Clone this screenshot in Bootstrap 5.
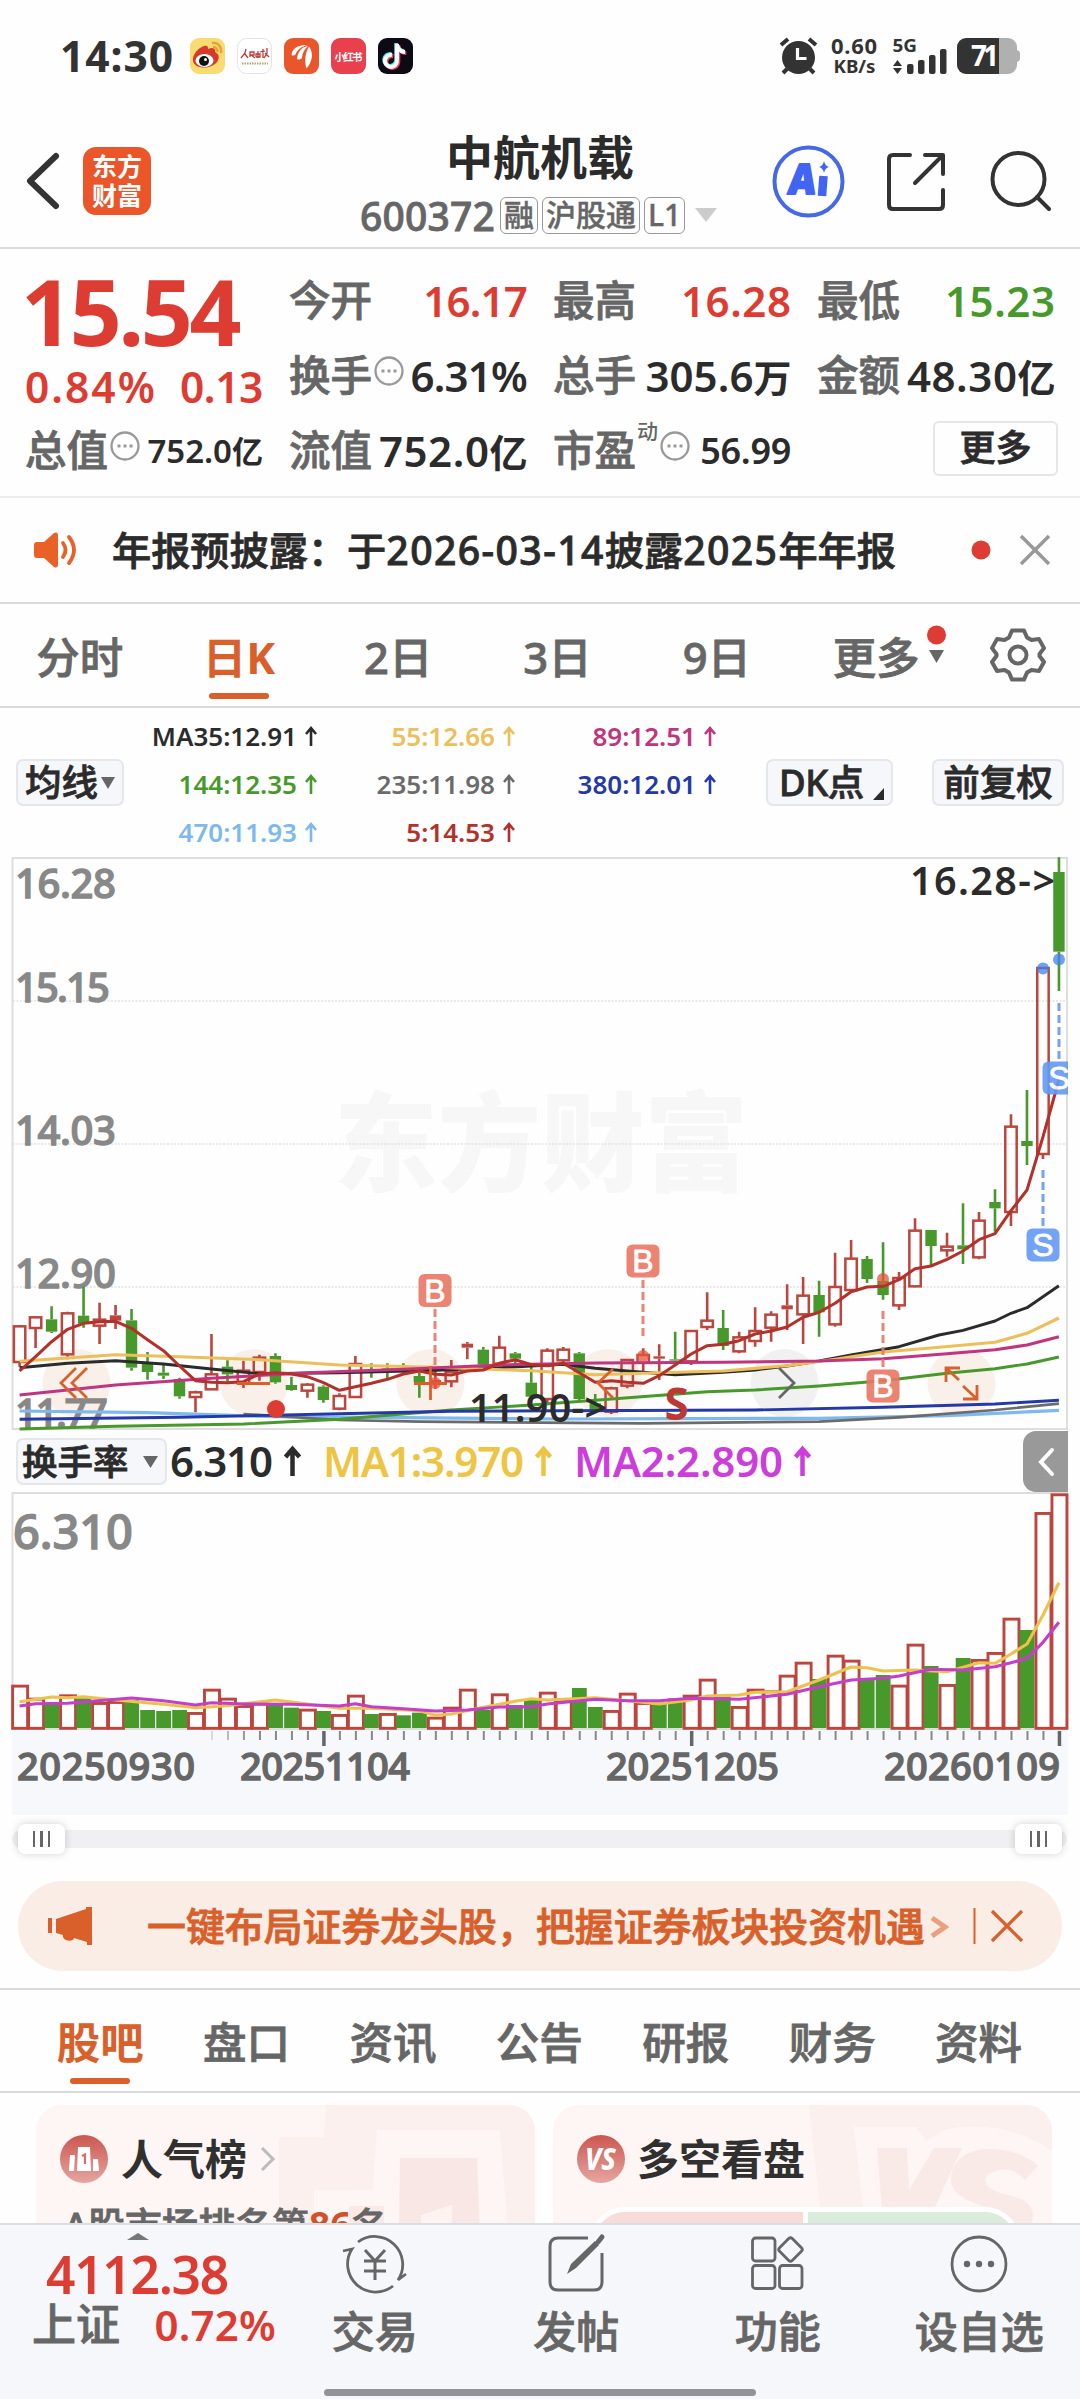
<!DOCTYPE html>
<html lang="zh-CN">
<head>
<meta charset="utf-8">
<meta name="viewport" content="width=device-width, initial-scale=1">
<title>中航机载 600372</title>
<link href="https://cdn.jsdelivr.net/npm/bootstrap@5.3.0/dist/css/bootstrap.min.css" rel="stylesheet">
<style>
:root{--up:#dd3c32;--down:#47992c;--ink:#2b2b2b;--sub:#666;--brand:#d9602a;--rule:#dadada}
body{width:1080px;height:2400px;overflow:hidden;background:#fefefe;color:var(--ink);font-family:"Noto Sans","Noto Sans CJK SC",sans-serif;font-weight:500;line-height:1}
svg{display:block;flex:none;overflow:visible}
.nw,.nw *{white-space:nowrap}
/* thickens the regular face to a medium weight */
.med{-webkit-text-stroke:.8px currentColor}
text.axisnum{fill:#888;stroke:#888;stroke-width:1.3px}
text.axisdate{fill:#666;stroke:#666;stroke-width:1.3px}
.nomed{-webkit-text-stroke:0}
.statusbar{height:110px;padding:2px 60px 0 60px}
.clock{font-size:42.5px;font-weight:700;letter-spacing:1px;width:130px;color:#333}
.topbar{height:139px;border-bottom:2px solid var(--rule)}
.brandlogo{width:68px;height:68px;border-radius:13px;background:#ea5529;color:#fff;font-size:25px;font-weight:700;line-height:29px}
.stockname{font-size:47px;font-weight:700;line-height:50px}
.codeline{font-size:39px;color:var(--sub)}
.tagbox{border:1.5px solid #999;border-radius:6px;height:37px;font-size:30px;line-height:33px;text-align:center;-webkit-text-stroke:.4px currentColor}
.quotes{display:grid;grid-template-columns:repeat(4,238px);column-gap:26px;grid-template-rows:75px 75px 75px;padding:14px 0 0 25px;height:249px;border-bottom:2px solid #eee}
.bigprice{font-size:91px;font-weight:700;letter-spacing:-3.3px;color:var(--up);height:94px;line-height:97px;margin-left:-4px}
.qlabel{font-size:41.5px;color:var(--sub)}
.qval{font-size:42px;letter-spacing:.6px;margin-right:-.6px}
.tightnum{letter-spacing:-.8px;margin-right:0}
.unit{font-size:38px;letter-spacing:0}
.red{color:var(--up)}.grn{color:var(--down)}
.morebtn{width:125px;height:55px;border:2px solid #e6e6e6;border-radius:6px;font-size:36px}
.notice{height:106px;border-bottom:2px solid var(--rule);font-size:39.2px}
.ktabs{height:104px;border-bottom:2px solid var(--rule);color:var(--sub);font-size:43.5px}
.ktabs>div{width:159.3px;height:102px;padding-top:5px}
.on{color:var(--brand);position:relative;font-weight:700;-webkit-text-stroke:0}
.on::after{content:"";position:absolute;left:50%;bottom:7px;width:60px;height:6px;margin-left:-30px;border-radius:3px;background:var(--brand)}
.mablock{height:149px}
.chip{background:#f6f7fa;border:2px solid #e5e7eb;border-radius:7px;height:47px;font-size:36.5px}
.malist{display:grid;grid-template-columns:200px 198px 201px;grid-template-rows:48px 48px 48px;font-size:26px;font-weight:600;width:599px;padding-top:2px}
.malist>div{display:flex;justify-content:flex-end;align-items:center;gap:8px}
.turnover{height:63px;font-size:42px;font-weight:600}
.drawer{width:45px;height:61px;background:#999;border-radius:13px 0 0 13px}
.track{margin:15px 13px 0 12px;height:18px;border-radius:9px;background:#f0f0f3}
.thumb{width:47px;height:30px;border-radius:7px;background:#fff;box-shadow:0 0 8px rgba(0,0,0,.18);gap:5px}
.thumb i{width:2.5px;height:16px;background:#666}
.promo{margin:33px 18px 17px;height:90px;border-radius:45px;background:#faede5;color:var(--brand);font-size:38.9px}
.ntabs{height:105px;border-top:2px solid var(--rule);border-bottom:2px solid var(--rule);font-size:43.5px;color:var(--sub);padding:0 28px 0 27px}
.ntabs>div{height:101px;width:146.4px;padding-top:5px}
.feed{height:130px;overflow:hidden;padding:12px 28px 0 36px;gap:18px}
.fcard{width:499px;height:240px;border-radius:26px;background:#fdf6f4;overflow:hidden;position:relative}
.fcard>.backdrop{position:absolute;left:0;top:0}
.fcard>.inner{position:relative}
.fhead{font-size:42px;font-weight:700;height:108px;padding-left:24px;color:#303030}
.frank{font-size:36.8px;color:var(--sub);padding-left:28px;margin-top:-7px;line-height:38px}
.pill2{width:430px;height:70px;margin:-6px 0 0 37px;border:5px solid #fff;border-radius:38px;overflow:hidden;font-size:32px;font-weight:700}
.pill2>div{padding-top:12px}
.bottombar{height:176px;background:#f6f7fa;border-top:2px solid #dcdde0;color:var(--sub);position:relative}
.homebar{position:absolute;left:324px;bottom:3px;width:432px;height:7px;border-radius:4px;background:#929395}
.navcell{width:201.5px;font-size:43px}
</style>
<script src="https://cdn.jsdelivr.net/npm/bootstrap@5.3.0/dist/js/bootstrap.bundle.min.js"></script>
</head>
<body class="nw">

<div class="statusbar d-flex align-items-center">
  <div class="clock">14:30</div>
  <div class="d-flex" style="gap:12px">
    <svg width="35" height="36" viewBox="0 0 35 36"><rect width="35" height="36" rx="9" fill="#f8dc72"/><path d="M3 23C2 17 8 10 14 8c4-1 4 1 4 3 4-2 8-1 7 3 4 2 5 6 2 10-5 7-22 8-24-1z" fill="#d83a2a"/><ellipse cx="14.500" cy="22.500" rx="9" ry="6.500" fill="#fff"/><circle cx="14" cy="23" r="5" fill="#111"/><circle cx="15.500" cy="21.500" r="1.500" fill="#fff"/><path d="M22 5c6-1 10 4 9 10M23 9c3 0 5 2 4 5" stroke="#eaa13a" stroke-width="2.500" fill="none"/></svg>
    <svg width="35" height="36" viewBox="0 0 35 36"><rect x=".5" y=".5" width="34" height="35" rx="9" fill="#fff" stroke="#e4e4e4"/><path d="M4 20l4-5 1-4M8 16l3 4M13 19v-5h4v3h-3l4 3M19 19v-3h4v3h-4M21 13v7M26 11v9M25 14l3-1M30 10v5l-3 5M28 15l4 4M23 14l3-1" stroke="#bd3b3b" stroke-width="1.300" fill="none"/><path d="M5 25.500h26" stroke="#b9a66a" stroke-width="2" stroke-dasharray="1.500 1"/></svg>
    <svg width="35" height="36" viewBox="0 0 35 36"><rect width="35" height="36" rx="9" fill="#ea5529"/><path d="M7.500 17C8 10 15 6.500 23 7c-6 2-10 5-11.500 9.500-1 1-2.500 1.500-4 .5zM13 21c.5-7 5-12.500 11-13-4 4-5.500 7-6 12-1.500 1.500-3.500 2-5 1zM22.500 30.500c-2.500-8-1-16 2.500-22 4.500 6 4 14.500-2.500 22z" fill="#fff"/></svg>
    <svg width="35" height="36" viewBox="0 0 35 36"><rect width="35" height="36" rx="9" fill="#e9404d"/><text x="17.500" y="22.500" font-size="10.500" font-weight="700" fill="#fff" text-anchor="middle" textLength="28">小红书</text></svg>
    <svg width="35" height="36" viewBox="0 0 35 36"><rect width="35" height="36" rx="9" fill="#0c0b14"/><g fill="none" stroke-width="4"><path d="M19 6v17a6 6 0 1 1-5-6M19 7c1 4 4 7 8 7" stroke="#f0405b" transform="translate(1.300 1)"/><path d="M19 5v17a6 6 0 1 1-5-6M19 6c1 4 4 7 8 7" stroke="#4ee0de" transform="translate(-.8 0)"/><path d="M19 6v17a6 6 0 1 1-5-6M19 7c1 4 4 7 8 7" stroke="#fff"/></g></svg>
  </div>
  <svg width="240" height="38" viewBox="780 38 240 38" class="ms-auto" fill="#333">
    <circle cx="798.500" cy="58.500" r="16.500"/><path d="M797.500 49v10.500h9" stroke="#fff" stroke-width="3.200" fill="none"/><path d="M781 46l7-6M816 46l-7-6M787 70l-4 4M810 70l4 4" stroke="#333" stroke-width="4"/>
    <text x="831" y="55" font-size="22" font-weight="700" textLength="46">0.60</text><text x="833.500" y="74" font-size="18.500" font-weight="700" textLength="42" lengthAdjust="spacingAndGlyphs">KB/s</text>
    <text x="892.500" y="53" font-size="18.500" font-weight="700" textLength="24.500" lengthAdjust="spacingAndGlyphs">5G</text>
    <path d="M893 67l4.500-6 4.500 6zM893 69l4.500 6 4.500-6z"/><rect x="907" y="65" width="6.500" height="10" rx="2"/><rect x="918" y="61" width="6.500" height="14" rx="2"/><rect x="929" y="56" width="6.500" height="19" rx="2"/><rect x="940" y="50" width="6.500" height="25" rx="2"/>
    <path d="M967 39h41a9 9 0 0 1 9 9v3q3 1 3 3v6q0 2-3 3v3a9 9 0 0 1-9 9h-41z" fill="#b0b0b0"/><path d="M999 39h-33a9 9 0 0 0-9 9v18a9 9 0 0 0 9 9h33z"/>
    <text x="971" y="67" font-size="28" font-weight="700" fill="#fff" textLength="28">71</text>
  </svg>
</div>

<div class="topbar d-flex">
  <svg width="32" height="56" viewBox="0 0 32 56" style="margin:43px 0 0 27px"><path d="M29 3L3 28l26 25" stroke="#333" stroke-width="6" fill="none" stroke-linecap="round" stroke-linejoin="round"/></svg>
  <div class="brandlogo text-center" style="margin:37px 0 0 24px;padding-top:5px">东方<br>财富</div>
  <div class="d-flex flex-column" style="margin-left:209px;width:371px">
    <div class="stockname" style="margin:22px 0 0 86px">中航机载</div>
    <div class="codeline med d-flex align-items-center" style="height:38px;margin-top:14px">
      <span style="width:140px;letter-spacing:.2px">600372</span>
      <span class="tagbox" style="width:38px">融</span><span class="tagbox" style="width:98px;margin-left:4px">沪股通</span><span class="tagbox" style="width:41px;margin-left:4px">L1</span>
      <svg width="22" height="14" style="margin-left:10px"><path d="M0 0h22L11 14z" fill="#ccc"/></svg>
    </div>
  </div>
  <svg width="280" height="74" viewBox="772 145 280 74" fill="none" stroke="#333" stroke-width="4" stroke-linecap="round" stroke-linejoin="round" style="margin:35px 0 0 41px">
    <circle cx="808.500" cy="181.500" r="34" stroke="#4568e8"/>
    <text x="786" y="194" font-size="42" font-weight="900" fill="#4164f5" stroke="#4164f5" stroke-width="2" textLength="27" lengthAdjust="spacingAndGlyphs" transform="translate(25 0) skewX(-7)">A</text><path d="M823.500 176l-1.500 20" stroke="#4164f5" stroke-width="8.500" stroke-linecap="butt"/><path d="M824 161q1 5 5 6-4 1-5 6-1-5-5-6 4-1 5-6z" fill="#4164f5" stroke="none"/>
    <path d="M910 155h-17q-4 0-4 4v46q0 4 4 4h46q4 0 4-4v-15M925 155h18v19M943 155l-28 28"/>
    <circle cx="1018.500" cy="179" r="26"/><path d="M1037 197l12 12"/>
  </svg>
</div>

<div class="quotes">
  <div style="grid-row:span 2">
    <div class="bigprice">15.54</div>
    <div class="red d-flex justify-content-between" style="font-size:42.500px;margin-top:9px;font-weight:600"><span style="letter-spacing:2px">0.84%</span><span style="letter-spacing:-.4px">0.13</span></div>
  </div>
  <div class="d-flex align-items-center justify-content-between"><span class="qlabel med">今开</span><span class="qval tightnum red fw-semibold">16.17</span></div>
  <div class="d-flex align-items-center justify-content-between"><span class="qlabel med">最高</span><span class="qval red fw-semibold">16.28</span></div>
  <div class="d-flex align-items-center justify-content-between"><span class="qlabel med">最低</span><span class="qval grn fw-semibold">15.23</span></div>
  <div class="d-flex align-items-center"><span class="qlabel med">换手</span><svg width="30" height="30" viewBox="0 0 30 30" style="margin:-10px 0 0 2px"><circle cx="15" cy="15" r="13.500" fill="none" stroke="#999" stroke-width="2.300"/><path d="M7.500 15h3M13.500 15h3M19.500 15h3" stroke="#999" stroke-width="3"/></svg><span class="qval tightnum ms-auto fw-semibold">6.31%</span></div>
  <div class="d-flex align-items-center justify-content-between"><span class="qlabel med">总手</span><span class="qval fw-semibold" style="letter-spacing:.1px">305.6<span class="unit">万</span></span></div>
  <div class="d-flex align-items-center justify-content-between"><span class="qlabel med">金额</span><span class="qval fw-semibold">48.30<span class="unit">亿</span></span></div>
  <div class="d-flex align-items-center"><span class="qlabel med">总值</span><svg width="30" height="30" viewBox="0 0 30 30" style="margin:-10px 0 0 2px"><circle cx="15" cy="15" r="13.500" fill="none" stroke="#999" stroke-width="2.300"/><path d="M7.500 15h3M13.500 15h3M19.500 15h3" stroke="#999" stroke-width="3"/></svg><span class="ms-auto fw-semibold" style="font-size:33px">752.0<span style="font-size:31px">亿</span></span></div>
  <div class="d-flex align-items-center justify-content-between"><span class="qlabel med">流值</span><span class="qval fw-semibold">752.0<span class="unit">亿</span></span></div>
  <div class="d-flex align-items-center"><span class="qlabel med">市盈</span><span style="font-size:21px;margin:-38px 0 0 1px;color:#666">动</span><svg width="30" height="30" viewBox="0 0 30 30" style="margin:-10px 0 0 2px"><circle cx="15" cy="15" r="13.500" fill="none" stroke="#999" stroke-width="2.300"/><path d="M7.500 15h3M13.500 15h3M19.500 15h3" stroke="#999" stroke-width="3"/></svg><span class="ms-auto fw-semibold" style="font-size:36px;letter-spacing:-.3px">56.99</span></div>
  <div class="d-flex align-items-center justify-content-end"><span class="morebtn med d-flex align-items-center justify-content-center" style="margin:-5px -3px 0 0">更多</span></div>
</div>

<div class="notice d-flex align-items-center">
  <svg width="44" height="36" viewBox="0 0 44 36" style="margin-left:34px"><path d="M3 10h7L20 1q4-2 4 3v28q0 5-4 3L10 26H3q-3 0-3-3V13q0-3 3-3z" fill="#ea6128"/><path d="M29 11q5 7 0 14M35 5q10 13 0 26" stroke="#ea6128" stroke-width="3.800" fill="none" stroke-linecap="round"/></svg>
  <span class="med" style="margin-left:34px">年报预披露：于<span style="letter-spacing:1.400px">2026-03-14</span>披露<span style="letter-spacing:1.400px">2025</span>年年报</span>
  <svg width="80" height="30" class="ms-auto" style="margin-right:29px"><circle cx="10" cy="15" r="9.500" fill="#dd3c32"/><path d="M50 1l28 28M78 1L50 29" stroke="#999" stroke-width="3.500"/></svg>
</div>

<div class="ktabs med d-flex align-items-center">
  <div class="d-flex align-items-center justify-content-center">分时</div>
  <div class="on d-flex align-items-center justify-content-center">日K</div>
  <div class="d-flex align-items-center justify-content-center">2日</div>
  <div class="d-flex align-items-center justify-content-center">3日</div>
  <div class="d-flex align-items-center justify-content-center">9日</div>
  <div class="d-flex align-items-center justify-content-center position-relative">更多<svg class="position-absolute" width="22" height="42" style="left:130px;top:21px"><circle cx="10.500" cy="10" r="9.500" fill="#dd3c32"/><path d="M3 25h15l-7.500 13z" fill="#666"/></svg></div>
  <svg width="52" height="54" viewBox="-26 -27 52 54" fill="none" stroke="#666" stroke-width="4" stroke-linejoin="round" style="margin-left:36px"><path d="M-6-24.500h12l3 7 4.500 2.600 7.500-1 5 9-4.500 5.900v2l4.500 6-5 9-7.500-1-4.500 2.600-3 7h-12l-3-7-4.500-2.600-7.500 1-5-9 4.500-6v-2l-4.500-5.900 5-9 7.500 1 4.500-2.600z"/><circle r="8.500"/></svg>
</div>

<div class="mablock d-flex align-items-center position-relative">
  <span class="chip med d-flex align-items-center justify-content-center" style="width:108px;margin-left:16px">均线<svg width="14" height="12" style="margin-left:3px"><path d="M0 0h14L7 12z" fill="#666"/></svg></span>
  <div class="malist" style="margin-left:-7px" id="ma"></div>
  <span class="chip med d-flex align-items-center" style="width:127px;margin-left:50px;padding-left:11px;letter-spacing:-.5px">DK点<svg width="11" height="12" style="margin:22px 0 0 9px"><path d="M11 0v12H0z" fill="#2b2b2b"/></svg></span>
  <span class="chip med d-flex align-items-center justify-content-center" style="width:132px;margin-left:39px">前复权</span>
</div>

<svg id="kline" width="1080" height="573" viewBox="0 857 1080 573"></svg>

<div class="turnover d-flex align-items-center">
  <span class="chip med d-flex align-items-center" style="width:151px;margin-left:16px;padding-left:4px;font-size:35.500px;font-weight:500">换手率<svg width="15" height="12" style="margin-left:14px"><path d="M0 0h15L7.500 12z" fill="#666"/></svg></span>
  <svg width="846" height="60" viewBox="167 1431 846 60" font-size="42" font-weight="600">
    <text x="170" y="1475.500" fill="#2b2b2b" textLength="103">6.310</text><text x="323" y="1475.500" fill="#eec443" textLength="201">MA1:3.970</text><text x="574" y="1475.500" fill="#cc3ddb" textLength="209">MA2:2.890</text>
    <g fill="none" stroke-width="4.500"><path d="M292.500 1475v-27M285.500 1456l7-8 7 8" stroke="#2b2b2b"/><path d="M543.500 1475v-27M536.500 1456l7-8 7 8" stroke="#eec443"/><path d="M802.500 1475v-27M795.500 1456l7-8 7 8" stroke="#cc3ddb"/></g>
  </svg>
  <span class="drawer d-flex align-items-center justify-content-center" style="margin-left:10px"><svg width="16" height="28"><path d="M14 2L3 14l11 12" stroke="#fff" stroke-width="4" fill="none" stroke-linecap="round"/></svg></span>
</div>

<svg id="vol" width="1080" height="322" viewBox="0 1493 1080 322"></svg>

<div class="track d-flex align-items-center justify-content-between" style="padding:0 5px 0 6px">
  <div class="thumb d-flex align-items-center justify-content-center"><i></i><i></i><i></i></div>
  <div class="thumb d-flex align-items-center justify-content-center"><i></i><i></i><i></i></div>
</div>

<div class="promo d-flex align-items-center">
  <svg width="46" height="38" viewBox="0 0 46 38" style="margin-left:30px" fill="#d9602a"><path d="M0 11h4v15H0zM8 12L38 2V0h6v38h-5v-3l-13-4c0 4-12 4-11-3l-7-2z"/></svg>
  <span class="med" style="margin-left:53px">一键布局证券龙头股，把握证券板块投资机遇</span>
  <svg width="98" height="38" viewBox="0 0 98 38" fill="none" stroke="#d9602a" style="margin-left:5px"><path d="M2 11l13 9-13 9" stroke-width="5" opacity=".55"/><path d="M44.500 1v36" stroke-width="2"/><path d="M62 4l30 30M92 4L62 34" stroke-width="3.300"/></svg>
</div>

<div class="ntabs med d-flex align-items-center">
  <div class="on d-flex align-items-center justify-content-center">股吧</div>
  <div class="d-flex align-items-center justify-content-center">盘口</div>
  <div class="d-flex align-items-center justify-content-center">资讯</div>
  <div class="d-flex align-items-center justify-content-center">公告</div>
  <div class="d-flex align-items-center justify-content-center">研报</div>
  <div class="d-flex align-items-center justify-content-center">财务</div>
  <div class="d-flex align-items-center justify-content-center">资料</div>
</div>

<svg width="0" height="0" class="position-absolute"><defs><linearGradient id="rg" x2="0" y2="1"><stop stop-color="#cb5750"/><stop offset="1" stop-color="#e6a5a0"/></linearGradient></defs></svg>
<div class="feed d-flex">
  <div class="fcard">
    <svg class="backdrop" width="499" height="130"><path d="M290 0h209v130H243V32h45z" fill="#fbf0ee"/><path d="M341 25h123l8 105H333z" fill="#fdf6f4"/><path d="M278 85h58v45h-58z" fill="#fdf6f4"/><path d="M364 53h77l3 77h-81z" fill="#f8e7e5"/><path d="M313 101h35v29h-35z" fill="#f9eae8"/><path d="M385 110l31-10v30h-31z" fill="#fdf4f2"/></svg>
    <div class="inner">
      <div class="fhead d-flex align-items-center"><svg width="48" height="48" viewBox="0 0 48 48"><circle cx="24" cy="24" r="24" fill="url(#rg)"/><path d="M10 20h5l-1 16H9zM18 12h12l1 24H17zM33 24h5l1 12h-6z" fill="#fff"/><path d="M22 21l3-1.500V29" stroke="#d27069" stroke-width="2.200" fill="none"/></svg><span style="margin-left:13px">人气榜</span><svg width="14" height="24" style="margin-left:14px"><path d="M1 1l11 11L1 23" stroke="#bbb" stroke-width="3" fill="none"/></svg></div>
      <div class="frank med">A股市场排名第<b class="nomed" style="color:#d4502a">86</b>名</div>
    </div>
  </div>
  <div class="fcard">
    <svg class="backdrop" width="499" height="130"><path d="M256 0h243v130H270z" fill="#fbf0ee"/><path d="M301 22h62l10 14 20-12q60-10 106 22v84H313z" fill="#fdf6f4"/><path d="M324 43h30l2 42 25-42h28l-40 87h-38z" fill="#f9e9e7"/><path d="M485 61c-20-20-76-27-86 6-7 24 22 31 46 38l-6 25h36c10-25 5-34-20-40-30-7-28-21-8-25 12-2 20 4 25 10z" fill="#f9e9e7"/></svg>
    <div class="inner">
      <div class="fhead d-flex align-items-center"><svg width="48" height="48" viewBox="0 0 48 48"><circle cx="24" cy="24" r="24" fill="url(#rg)"/><text x="8" y="35" font-size="31" font-weight="800" font-style="italic" fill="#fff" textLength="31" lengthAdjust="spacingAndGlyphs">VS</text></svg><span style="margin-left:12px">多空看盘</span></div>
      <div class="pill2 d-flex text-center"><div style="width:208px;background:#f8dcda;color:#cf5a30">看涨</div><div style="width:5px;background:#fff"></div><div class="flex-fill" style="background:#daeddd;color:#4da364">看跌</div></div>
    </div>
  </div>
</div>

<div class="bottombar d-flex">
  <div style="width:274px">
    <svg width="22" height="7" style="margin:8px 0 0 127px"><path d="M0 7L11 0l11 7z" fill="#777"/></svg>
    <div class="red fw-semibold" style="font-size:51.500px;letter-spacing:-1.300px;margin:8px 0 0 46px;line-height:52px">4112.38</div>
    <div class="d-flex align-items-center" style="padding-left:32px;margin-top:1px;font-size:44px;height:46px"><span class="med">上证</span><span class="red fw-semibold ms-auto" style="font-size:42px;letter-spacing:.2px;margin:2px -2px 0 0">0.72%</span></div>
  </div>
  <div class="navcell med d-flex flex-column align-items-center">
    <svg width="66" height="60" viewBox="-33 -30 66 60" style="margin-top:9px" fill="none" stroke="#666" stroke-width="2.800"><path d="M-17-22A28 28 0 0 1 23 16l8-6M18 22A28 28 0 0 1-23-15l-9 2"/><path d="M-10-14L0-3 10-14M0-3v19M-11-3h22M-11 7h22" stroke-width="3"/></svg>
    <span style="margin-top:16px">交易</span>
  </div>
  <div class="navcell med d-flex flex-column align-items-center">
    <svg width="56" height="60" viewBox="0 0 56 60" style="margin-top:9px" fill="none" stroke="#666" stroke-width="3"><path d="M40 4H10q-8 0-8 8v36q0 8 8 8h36q8 0 8-8V19"/><path d="M19 40l4-10 24-23 4 4-23 23z" fill="#666" stroke="none"/><path d="M50 8l4-5" stroke-width="5" stroke-linecap="round"/></svg>
    <span style="margin-top:16px">发帖</span>
  </div>
  <div class="navcell med d-flex flex-column align-items-center">
    <svg width="54" height="60" viewBox="0 0 54 60" style="margin-top:9px" fill="none" stroke="#666" stroke-width="2.800"><rect x="1.500" y="4" width="22.500" height="23" rx="3"/><rect x="1.500" y="31.500" width="22.500" height="23" rx="3"/><rect x="28.500" y="31.500" width="22.500" height="23" rx="3"/><rect x="-9" y="-9" width="18" height="18" rx="2.500" transform="translate(39.500 15.500) rotate(45)"/></svg>
    <span style="margin-top:16px">功能</span>
  </div>
  <div class="navcell med d-flex flex-column align-items-center">
    <svg width="60" height="60" viewBox="-30 -30 60 60" style="margin-top:9px" fill="none" stroke="#666" stroke-width="2.800"><circle r="27"/><g fill="#666" stroke="none"><circle cx="-12" r="3.200"/><circle r="3.200"/><circle cx="12" r="3.200"/></g></svg>
    <span style="margin-top:16px">设自选</span>
  </div>
  <div class="homebar"></div>
</div>

<script>
// moving-average legend
const legend=[['MA35:12.91','#2b2b2b'],['55:12.66','#edbf5a'],['89:12.51','#c0357f'],['144:12.35','#47992c'],['235:11.98','#6b6b6b'],['380:12.01','#2438a8'],['470:11.93','#7db9ee'],['5:14.53','#b3302b']];
document.getElementById('ma').innerHTML=legend.map(([t,c])=>`<div style="color:${c}"><span>${t}</span><svg width="12" height="20"><path d="M6 20V2M1 8l5-6 5 6" stroke="${c}" stroke-width="2.600" fill="none"/></svg></div>`).join('');

const X=i=>19.6+i*15.99, Y=v=>1190+v/3;
const UP='#bc453e', DN='#47992c';
// high, body top, body bottom, low, kind (r hollow, f filled red, g green)
const K=[[405,409,516,530,'r'],[380,382,414,474,'r'],[349,388,425,429,'g'],[365,370,493,508,'r'],[291,377,401,413,'g'],[338,389,407,462,'r'],[345,376,392,417,'f'],[357,391,533,542,'g'],[486,518,546,569,'g'],[520,548,557,567,'g'],[563,567,619,626,'g'],[602,607,621,667,'r'],[432,553,598,600,'r'],[511,530,553,575,'g'],[512,542,580,594,'r'],[494,503,546,572,'r'],[490,498,577,581,'g'],[560,585,600,602,'g'],[580,584,602,623,'r'],[586,590,630,638,'g'],[610,618,656,661,'r'],[498,522,621,623,'r'],[520,540,544,563,'g'],[520,535,540,565,'g'],[520,535,540,552,'g'],[548,558,576,623,'g'],[540,570,582,596,'f'],[510,545,574,592,'r'],[456,461,473,508,'f'],[471,479,524,530,'g'],[437,473,521,525,'r'],[486,490,506,530,'g'],[530,578,620,640,'g'],[475,482,627,640,'r'],[471,479,511,518,'r'],[486,490,627,632,'g'],[612,640,660,665,'g'],[590,595,665,672,'r'],[508,510,587,595,'r'],[475,495,518,545,'r'],[463,499,506,570,'f'],[425,508,512,515,'g'],[420,423,514,525,'r'],[307,392,411,420,'r'],[360,414,468,480,'g'],[425,442,484,490,'r'],[352,423,453,470,'r'],[364,374,413,455,'r'],[283,346,358,420,'f'],[261,317,373,462,'r'],[272,315,367,440,'g'],[188,291,403,410,'r'],[150,206,300,305,'r'],[198,207,267,279,'g'],[157,273,315,329,'g'],[246,264,346,360,'r'],[85,122,289,292,'r'],[120,120,168,225,'g'],[128,170,181,200,'r'],[40,166,178,222,'g'],[66,92,202,208,'r'],[-2,36,55,125,'g'],[-227,-190,66,108,'r'],[-300,-147,-132,-75,'g'],[-669,-666,-108,-93,'r'],[-998,-954,-715,-597,'g']];
const poly=(pts,y,c,w)=>`<polyline points="${pts.map(([i,v])=>X(i).toFixed(1)+','+y(v).toFixed(1)).join(' ')}" fill="none" stroke="${c}" stroke-width="${w}" stroke-linejoin="round"/>`;
let s='<g font-weight="900" font-size="108" fill="#f7f7f7"><text x="334" y="1183" textLength="414" lengthAdjust="spacingAndGlyphs">东方财富</text></g>';
s+='<path d="M12.500 858H1067V1429H12.500z" fill="none" stroke="#dedede" stroke-width="2"/>';
[1001,1144,1287].forEach(y=>s+=`<path d="M13 ${y}H1067" stroke="#e2e2e2" stroke-width="1.500" stroke-dasharray="2 1.500"/>`);
[76.5,254,430.5,608,961.5].forEach(x=>s+=`<circle cx="${x}" cy="1383" r="34" fill="#faf0ea"/>`);
s+='<circle cx="784.500" cy="1383" r="34" fill="#f1f1f1"/>';
[['16.28',897.5],['15.15',1002],['14.03',1145],['12.90',1288],['11.77',1427.5]].forEach(([t,y])=>s+=`<text class="axisnum" x="15" y="${y}" font-size="40" textLength="${t=='15.15'?95:t=='11.77'?93:101}">${t}</text>`);
K.forEach(([h,a,b,l,k],i)=>{const x=X(i),c=k=='g'?DN:UP;
  s+=`<path d="M${x} ${Y(h)}V${Y(a)}M${x} ${Y(b)}V${Y(l)}" stroke="${c}" stroke-width="2.600"/>`;
  s+=k=='r'?`<rect x="${x-5.7}" y="${Y(a)}" width="11.400" height="${(b-a)/3}" fill="none" stroke="${c}" stroke-width="2.500"/>`:`<rect x="${x-5.7}" y="${Y(a)}" width="11.400" height="${(b-a)/3}" fill="${c}"/>`;});
s+=poly([[0,663],[8,668],[16,680],[24,683],[34,687],[50,685],[58,677],[65,661]],Y,'#7db9ee',3.2);
s+=poly([[14,672],[20,690],[25,695],[39,700],[50,695],[55,682],[61,660],[65,641]],Y,'#6b6b6b',2.7);
s+=poly([[0,717],[6,709],[14,702],[20,688],[27,660],[32,645],[36,631],[43,605],[46,600],[50,588],[54,572],[58,550],[61,536],[63,522],[65,501]],Y,'#47992c',2.9);
s+=poly([[0,688],[10,682],[20,671],[27,664],[34,662],[46,660],[54,652],[61,642],[65,631]],Y,'#2438a8',2.9);
s+=poly([[0,533],[3,520],[6,512],[9,522],[12,537],[15,551],[20,548],[26,541],[30,533],[34,523],[36,535],[38,543],[41,554],[44,547],[46,540],[48,528],[50,513],[52,495],[55,470],[57.500,435],[59,421],[61,393],[62,370],[63,353],[65,287]],Y,'#2b2b2b',2.9);
s+=poly([[0,514],[6,494],[10,500],[15,509],[20,525],[26,532],[32,542],[36,554],[40,548],[44,543],[48,527],[51,508],[54,486],[57,474],[61,457],[63,430],[65,384]],Y,'#edbf5a',3.1);
s+=poly([[0,615],[6,585],[12,565],[18,548],[24,538],[30,525],[36,519],[44,517],[50,513],[54,506],[58,491],[61,479],[63,465],[65,440]],Y,'#c0357f',3.1);
const m5=[543,500,455,418,400,395,394,415,449,482,528,572,577,578,575,552,548,552,560,578,601,590,580,568,552,543,553,555,543,540,520,509,524,527,520,548,577,572,577,580,557,525,492,467,463,452,432,423,411,382,367,340,305,291,289,269,236,228,208,183,149,131,62,0,-160,-330];
s+=poly(m5.map((v,i)=>[i,v]),Y,'#b3302b',3);
// floating tool icons
s+='<g fill="none" stroke="#d9602a" stroke-width="2.800"><path d="M76 1368l-15 15 15 15M87 1368l-15 15 15 15M237 1383.500h33M414 1383.500h33M430.500 1366v34M613 1369l-15 14 15 15"/><path d="M959 1380l-13-12M946 1382v-14h14M963 1386l14 13M977 1385v14h-14"/></g><path d="M779 1368l15 15-15 15" fill="none" stroke="#666" stroke-width="2.800"/>';
s+='<circle cx="276" cy="1409" r="9" fill="#dd3c32"/>';
s+='<g font-weight="600" fill="#2b2b2b" font-size="39.500"><text x="469" y="1421.500" textLength="138">11.90-&gt;</text><text x="910" y="895" textLength="145">16.28-&gt;</text></g><text x="664.500" y="1419.500" font-size="44" font-weight="700" fill="#bb3934" textLength="24">S</text>';
// trade markers
const mark=(t,x,y,d0,d1,c)=>`<path d="M${x} ${d0}V${d1}" stroke="${c}" stroke-width="3" stroke-dasharray="8 4"/><rect x="${x-16.5}" y="${y}" width="33" height="33" rx="6" fill="${c}"/><text x="${x}" y="${y+27.5}" font-size="32" fill="#fff" stroke="#fff" stroke-width=".8" text-anchor="middle" style="font-family:'Liberation Sans'" font-weight="400">${t}</text>`;
s+='<g opacity=".9">'+mark('B',435,1274,1309,1365,'#e97764')+mark('B',643,1244.5,1280,1337,'#e97764')+mark('B',883,1369.5,1311,1367,'#e97764')+mark('S',1043,1228.5,1170,1227,'#659af3')+'</g>';
s+='<clipPath id="edge"><rect x="0" y="850" width="1068" height="600"/></clipPath><g opacity=".9" clip-path="url(#edge)">'+mark('S',1059,1061.5,1003,1060,'#659af3')+'</g>';
[[435,1383,'#e5553a'],[643,1356,'#e5553a'],[883,1279,'#e5553a'],[1043,968.5,'#3d82ee'],[1059,959.5,'#3d82ee']].forEach(([x,y,c])=>s+=`<circle cx="${x}" cy="${y}" r="6" fill="${c}" opacity=".75"/>`);
document.getElementById('kline').innerHTML=s;

// turnover bars: top of bar, R up / G down
const V='616R655R672G645R655G668R665R660G690G693G690G698R628R655R677R670R672G683G688R693G704R646R702G701R706G698G712R682R628R690G642R675G660G637R660R624G681G692R640R668R668G655G646R598R650G680R628R633R586R547R597G526R541R600G585G616R493R558G614R534G539R518R415R450G98R42R'.match(/\d+[RG]/g);
const W=v=>1480+v/3;
s='<rect x="12" y="1730" width="1056" height="85" fill="#f7f8fb"/><path d="M12.500 1729V1493H1067V1729z" fill="none" stroke="#dedede" stroke-width="2"/><text class="axisnum" x="13" y="1549" font-size="47" textLength="120">6.310</text>';
V.forEach((e,i)=>{const t=W(parseInt(e)),x=X(i);s+=e.endsWith('R')?`<rect x="${x-7}" y="${t+.8}" width="15" height="${1727.5-t}" fill="none" stroke="${UP}" stroke-width="2.900"/>`:`<rect x="${x-7.3}" y="${t}" width="14.800" height="${1728-t}" fill="${DN}"/>`;});
s+=poly([[0,665],[2,651],[3,653],[4,650],[6,660],[9,673],[11,683],[13,677],[16,660],[18,672],[20,685],[22,685],[25,692],[26,706],[27,702],[29,682],[31,664],[32,656],[33,660],[36,653],[38,662],[40,672],[42,660],[43,648],[45,645],[46,637],[48,635],[50,600],[52,561],[53,563],[54,573],[56,570],[58,575],[60,548],[61,550],[62,522],[63,492],[64,405],[65,308]],W,'#ebc34c',3.1);
s+=poly([[0,678],[1,671],[3,670],[7,654],[9,662],[11,675],[12,668],[14,672],[17,673],[20,678],[21,671],[22,680],[24,686],[26,693],[28,690],[30,681],[32,680],[33,672],[36,658],[38,662],[40,662],[42,655],[45,658],[48,643],[50,620],[52,600],[54,595],[55,588],[57,568],[59,570],[61,560],[62,548],[63,535],[64,487],[65,427]],W,'#c43fc9',3.1);
for(let i=12;i<66;i++){const big=i==19||i==42||i==65;s+=`<path d="M${X(i)+.5} 1731v${big?15:9}" stroke="${big?'#666':'#888'}" stroke-width="${big?3.5:2}" opacity="${Math.min(1,(i-11)*.28)}"/>`;}
[['20250930',17,178],['20251104',240,170],['20251205',606,173],['20260109',884,176]].forEach(([t,x,w])=>s+=`<text class="axisdate" x="${x}" y="1780" font-size="38" textLength="${w}">${t}</text>`);
document.getElementById('vol').innerHTML=s;
</script>
</body>
</html>
